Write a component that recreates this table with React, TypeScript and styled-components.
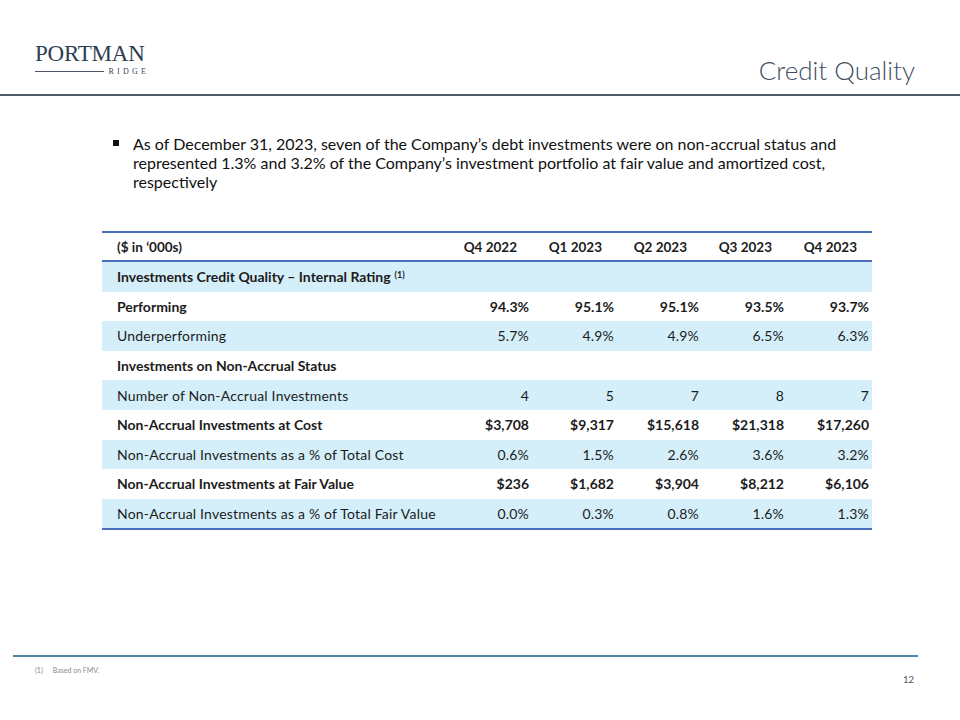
import * as React from 'react';
import styled, { createGlobalStyle } from 'styled-components';

const GlobalStyle = createGlobalStyle`
  html, body {
    margin: 0;
    padding: 0;
    background: #ffffff;
  }
`;

interface RowData {
  label: string;
  values: string[];
  shaded: boolean;
  bold: boolean;
  note?: string;
}

const quarters = ['Q4 2022', 'Q1 2023', 'Q2 2023', 'Q3 2023', 'Q4 2023'];

const rows: RowData[] = [
  { label: 'Investments Credit Quality \u2013 Internal Rating', note: '(1)', values: ['', '', '', '', ''], shaded: true, bold: true },
  { label: 'Performing', values: ['94.3%', '95.1%', '95.1%', '93.5%', '93.7%'], shaded: false, bold: true },
  { label: 'Underperforming', values: ['5.7%', '4.9%', '4.9%', '6.5%', '6.3%'], shaded: true, bold: false },
  { label: 'Investments on Non-Accrual Status', values: ['', '', '', '', ''], shaded: false, bold: true },
  { label: 'Number of Non-Accrual Investments', values: ['4', '5', '7', '8', '7'], shaded: true, bold: false },
  { label: 'Non-Accrual Investments at Cost', values: ['$3,708', '$9,317', '$15,618', '$21,318', '$17,260'], shaded: false, bold: true },
  { label: 'Non-Accrual Investments as a % of Total Cost', values: ['0.6%', '1.5%', '2.6%', '3.6%', '3.2%'], shaded: true, bold: false },
  { label: 'Non-Accrual Investments at Fair Value', values: ['$236', '$1,682', '$3,904', '$8,212', '$6,106'], shaded: false, bold: true },
  { label: 'Non-Accrual Investments as a % of Total Fair Value', values: ['0.0%', '0.3%', '0.8%', '1.6%', '1.3%'], shaded: true, bold: false },
];

const Slide = styled.div`
  width: 960px;
  height: 720px;
  display: flex;
  flex-direction: column;
  font-family: Lato, 'Open Sans', sans-serif;
  color: #1c1c1c;
  overflow: hidden;
`;

const Header = styled.div`
  display: flex;
  justify-content: space-between;
  align-items: flex-start;
  padding: 43px 45px 0 35px;
  height: 50px;
`;

const Logo = styled.div`
  display: flex;
  flex-direction: column;
  width: 111px;
`;

const LogoName = styled.div`
  font-family: 'Liberation Serif', serif;
  font-size: 23px;
  line-height: 22px;
  letter-spacing: -0.2px;
  color: #2e3d52;
`;

const LogoSub = styled.div`
  display: flex;
  align-items: center;
  gap: 5px;
  margin-top: 2px;
`;

const LogoRule = styled.div`
  flex: 1;
  height: 1px;
  background: #4a5666;
`;

const LogoRidge = styled.span`
  font-family: 'Liberation Serif', serif;
  font-size: 8px;
  letter-spacing: 3.2px;
  margin-right: -3px;
  color: #3b4658;
`;

const Title = styled.h1`
  margin: 12px 0 0 0;
  font-family: Lato, 'Open Sans', sans-serif;
  font-weight: 300;
  font-size: 26px;
  line-height: 30px;
  color: #414f63;
`;

const Divider = styled.div`
  height: 2px;
  background: #4f5b69;
  margin-top: 1px;
`;

const Bullets = styled.ul`
  list-style: none;
  margin: 38px 0 0 0;
  padding: 0 0 0 113px;
`;

const Bullet = styled.li`
  display: flex;
  gap: 14px;
  font-size: 16px;
  line-height: 19px;
  color: #111;
`;

const BulletMark = styled.span`
  flex: none;
  width: 6px;
  height: 6px;
  margin-top: 6px;
  background: #111;
`;

const Table = styled.div`
  margin: 40px 0 0 102px;
  width: 770px;
  display: grid;
  grid-template-columns: 345px repeat(5, 85px);
  border-top: 2px solid #4a6fbf;
  border-bottom: 2px solid #4a6fbf;
  font-size: 14px;
`;

const HeadCell = styled.div<{ $first?: boolean }>`
  height: 27px;
  display: flex;
  align-items: center;
  justify-content: ${p => (p.$first ? 'flex-start' : 'flex-end')};
  padding: ${p => (p.$first ? '0 0 0 15px' : '0 15px 0 0')};
  font-size: 13.5px;
  font-weight: 700;
  border-bottom: 2px solid #4a6fbf;
`;

const Cell = styled.div<{ $first?: boolean; $shaded: boolean; $bold: boolean }>`
  height: 29.6px;
  display: flex;
  align-items: center;
  justify-content: ${p => (p.$first ? 'flex-start' : 'flex-end')};
  padding: ${p => (p.$first ? '0 0 0 15px' : '0 3px 0 0')};
  background: ${p => (p.$shaded ? '#d4eff9' : '#ffffff')};
  font-weight: ${p => (p.$bold ? 700 : 400)};
  letter-spacing: ${p => (p.$bold ? '0' : '0.2px')};
  white-space: nowrap;
`;

const Note = styled.sup`
  font-size: 9px;
  margin-left: 4px;
  position: relative;
  top: -2px;
`;

const Spacer = styled.div`
  flex: 1;
`;

const Footer = styled.div`
  padding: 0 42px 0 13px;
  height: 65px;
`;

const FooterRule = styled.div`
  height: 1.5px;
  background: #4f86a6;
`;

const FooterRow = styled.div`
  display: flex;
  justify-content: space-between;
  align-items: flex-start;
  padding: 9px 0 0 22px;
`;

const Footnote = styled.div`
  display: flex;
  gap: 10px;
  font-size: 7px;
  color: #8a8a8a;
`;

const PageNum = styled.div`
  margin-top: 8px;
  margin-right: 4px;
  font-size: 9.5px;
  color: #46546a;
`;

export default function App() {
  return (
    <>
      <GlobalStyle />
      <Slide>
        <Header>
          <Logo>
            <LogoName>PORTMAN</LogoName>
            <LogoSub>
              <LogoRule />
              <LogoRidge>RIDGE</LogoRidge>
            </LogoSub>
          </Logo>
          <Title>Credit Quality</Title>
        </Header>
        <Divider />
        <Bullets>
          <Bullet>
            <BulletMark />
            <span>
              As of December 31, 2023, seven of the Company&rsquo;s debt investments were on non-accrual status and
              <br />
              represented 1.3% and 3.2% of the Company&rsquo;s investment portfolio at fair value and amortized cost,
              <br />
              respectively
            </span>
          </Bullet>
        </Bullets>
        <Table>
          <HeadCell $first>($ in &lsquo;000s)</HeadCell>
          {quarters.map(q => (
            <HeadCell key={q}>{q}</HeadCell>
          ))}
          {rows.map(r => (
            <React.Fragment key={r.label}>
              <Cell $first $shaded={r.shaded} $bold={r.bold}>
                {r.label}
                {r.note && <Note>{r.note}</Note>}
              </Cell>
              {r.values.map((v, i) => (
                <Cell key={i} $shaded={r.shaded} $bold={r.bold}>
                  {v}
                </Cell>
              ))}
            </React.Fragment>
          ))}
        </Table>
        <Spacer />
        <Footer>
          <FooterRule />
          <FooterRow>
            <Footnote>
              <span>(1)</span>
              <span>Based on FMV.</span>
            </Footnote>
            <PageNum>12</PageNum>
          </FooterRow>
        </Footer>
      </Slide>
    </>
  );
}
